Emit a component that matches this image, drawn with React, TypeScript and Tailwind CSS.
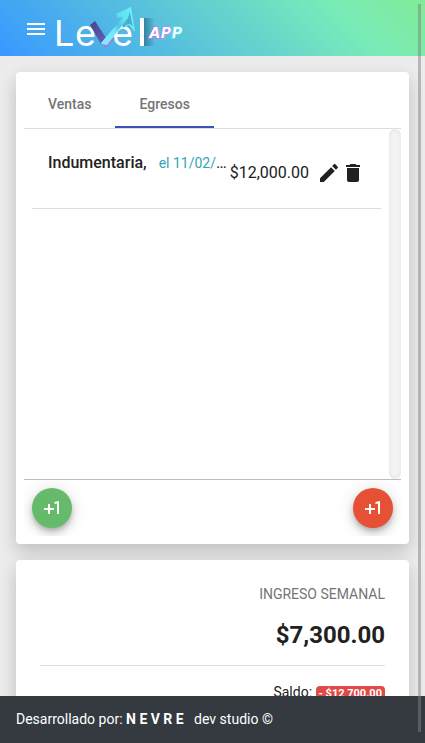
import React from "react";

function Icon({ d, className }: { d: string; className?: string }) {
  return (
    <svg viewBox="0 0 24 24" className={"size-6 fill-current " + (className ?? "")} aria-hidden="true">
      <path d={d} />
    </svg>
  );
}

const MENU = "M3 18h18v-2H3v2zm0-5h18v-2H3v2zm0-7v2h18V6H3z";
const EDIT =
  "M3 17.25V21h3.75L17.81 9.94l-3.75-3.75L3 17.25zM20.71 7.04c.39-.39.39-1.02 0-1.41l-2.34-2.34c-.39-.39-1.02-.39-1.41 0l-1.83 1.83 3.75 3.75 1.83-1.83z";
const TRASH = "M6 19c0 1.1.9 2 2 2h8c1.1 0 2-.9 2-2V7H6v12zM19 4h-3.5l-1-1h-5l-1 1H5v2h14V4z";
const PLUS_ONE = "M10 8H8v4H4v2h4v4h2v-4h4v-2h-4V8zm4.5-1.92V7.9l2.5-.5V18h2V5l-4.5 1.08z";

function Logo() {
  return (
    <svg viewBox="0 0 136 56" className="h-14 w-[136px]" role="img" aria-label="Level App">
      <defs>
        <linearGradient id="dark" x1="0" y1="0" x2="1" y2="1">
          <stop offset="0" stopColor="#43458c" />
          <stop offset="1" stopColor="#6a5cba" />
        </linearGradient>
        <linearGradient id="shaft" x1="1" y1="0" x2="0" y2="1">
          <stop offset="0" stopColor="#66f0fa" />
          <stop offset="0.3" stopColor="#5fe0f0" />
          <stop offset="0.45" stopColor="#4cc6e0" />
          <stop offset="0.6" stopColor="#6deafa" />
          <stop offset="1" stopColor="#86ecfc" />
        </linearGradient>
        <linearGradient id="shade" x1="0" y1="0" x2="1" y2="0">
          <stop offset="0" stopColor="#2b6f86" stopOpacity="0.75" />
          <stop offset="1" stopColor="#2b6f86" stopOpacity="0" />
        </linearGradient>
      </defs>
      <rect x="92" y="18" width="11" height="28" fill="url(#shade)" />
      <g fill="#fff" fontFamily="Inter, sans-serif" fontWeight="400" fontSize="36">
        <text x="2" y="46">L</text>
        <text x="23" y="46">e</text>
        <text x="60" y="46">e</text>
      </g>
      <rect x="88" y="18" width="4" height="28" fill="#fff" />
      <path d="M38 25l5-4 11 17-5 6z" fill="url(#dark)" />
      <path d="M49 43l7-5 7 0-9 10z" fill="#9d7fe0" />
      <path d="M78 12l-8 16 5-2 6 4z" fill="#48b0cc" />
      <path d="M49 43L71 17l-6 1-1-4 15-7-3 11-21 27-5-1z" fill="url(#shaft)" />
      <path d="M77 8l2-1 4 25-6-7-4 2 1-2 4-1 3 3z" fill="#6cf0fb" />
      <g
        fill="#fff"
        strokeWidth="1.6"
        paintOrder="stroke"
        fontFamily="Inter, sans-serif"
        fontStyle="italic"
        fontWeight="700"
        fontSize="15"
      >
        <text x="97" y="38" stroke="#c07be8">A</text>
        <text x="109" y="38" stroke="#b58af0">P</text>
        <text x="120" y="38" stroke="#4fe6f5">P</text>
      </g>
    </svg>
  );
}

const card = "rounded bg-white shadow-[0_8px_17px_0_rgba(0,0,0,0.12),0_6px_20px_0_rgba(0,0,0,0.08)]";
const fab =
  "flex size-10 items-center justify-center rounded-full text-white shadow-[0_3px_5px_-1px_rgba(0,0,0,0.2),0_6px_10px_0_rgba(0,0,0,0.14),0_1px_18px_0_rgba(0,0,0,0.12)]";

export default function App() {
  return (
    <div className="relative flex h-screen flex-col overflow-hidden bg-[#ececec] font-[Roboto,sans-serif] text-base text-[#212121]">
      <header className="flex h-14 shrink-0 items-center bg-[linear-gradient(45deg,#3898ff_0%,#7aecb8_80%,#80eb98_100%)] pl-6 text-white">
        <button type="button" aria-label="Menú" className="mt-0.5">
          <Icon d={MENU} />
        </button>
        <a href="#inicio" className="ml-1">
          <Logo />
        </a>
      </header>

      <main className="flex min-h-0 flex-1 flex-col gap-4 overflow-hidden p-4">
        <section className={"shrink-0 p-2 " + card}>
          <div role="tablist" className="flex border-b border-[#dddddd] text-sm font-medium text-[#757575]">
            <button type="button" role="tab" aria-selected="false" className="h-12 px-6">
              Ventas
            </button>
            <button type="button" role="tab" aria-selected="true" className="-mb-px h-12 border-b-2 border-[#3f51b5] px-6 pt-0.5">
              Egresos
            </button>
          </div>

          <div className="flex h-[350px]">
            <ul className="min-w-0 flex-1 px-2">
              <li className="flex h-20 items-center border-b border-[#dddddd] px-4 pt-2">
                <div className="mb-5 min-w-0 flex-1">
                  <p className="truncate">
                    <span className="mr-3 font-medium">Indumentaria,</span>
                    <span className="text-sm text-[#33a5ba]">el 11/02/2021</span>
                  </p>
                </div>
                <span>$12,000.00</span>
                <button type="button" aria-label="Editar" className="ml-2">
                  <Icon d={EDIT} />
                </button>
                <button type="button" aria-label="Eliminar">
                  <Icon d={TRASH} />
                </button>
              </li>
            </ul>
            <div className="w-3 rounded-[10px] bg-[#f5f5f5] shadow-[inset_0_0_6px_rgba(0,0,0,0.08)]" />
          </div>

          <div className="flex h-[57px] items-start justify-between overflow-hidden border-t border-[#bdbdbd] px-2 pt-2">
            <button type="button" aria-label="Agregar venta" className={fab + " bg-[#66bb6a]"}>
              <Icon d={PLUS_ONE} />
            </button>
            <button type="button" aria-label="Agregar egreso" className={fab + " bg-[#e65035]"}>
              <Icon d={PLUS_ONE} />
            </button>
          </div>
        </section>

        <section className={"shrink-0 px-6 pt-6 pb-6 text-right " + card}>
          <h2 className="text-sm leading-5 text-[#757575]">INGRESO SEMANAL</h2>
          <p className="mt-3 text-2xl leading-[38px] font-bold">$7,300.00</p>
          <hr className="mt-[11px] border-[#e0e0e0]" />
          <p className="mt-4 text-sm leading-5">
            Saldo:{" "}
            <span className="inline-block rounded bg-[#df4b47] px-[3px] text-[11px] leading-4 font-bold text-white">- $12,700.00</span>
          </p>
        </section>
      </main>

      <footer className="flex h-[47px] shrink-0 items-center bg-[#343a40] px-4 pb-0.5 text-sm text-white">
        <p className="whitespace-pre">
          Desarrollado por: <b>N E V R E</b>   dev studio ©
        </p>
      </footer>

      <div className="absolute top-1 right-1 bottom-[11px] w-[3px] bg-[#808080]/50" />
    </div>
  );
}
